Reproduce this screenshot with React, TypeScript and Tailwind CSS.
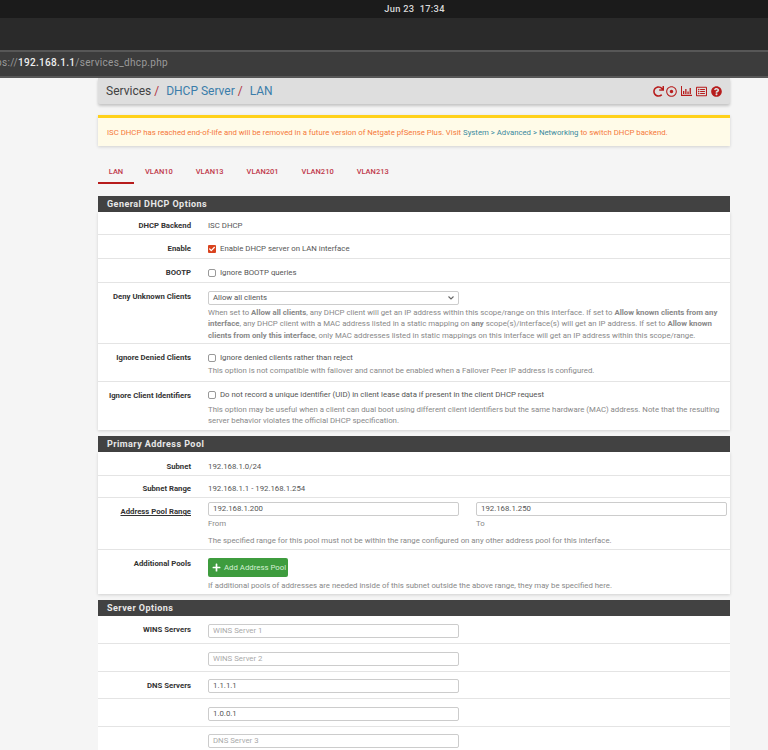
import { FaCheck, FaPlus, FaQuestionCircle, FaRedo, FaRegDotCircle, FaRegListAlt } from "react-icons/fa";
import type { ReactNode } from "react";

const Heading = ({ children, className = "" }: { children: ReactNode; className?: string }) => (
  <div className={`h-4 bg-[#424242] pl-[9px] text-[9px] leading-4 font-bold tracking-[0.45px] text-[#e8e8e8] ${className}`}>
    {children}
  </div>
);

const Row = ({ label, h, pt = "pt-0", labelPt = "pt-0", last = false, children, underline = false }: {
  label?: string; h: string; pt?: string; labelPt?: string; last?: boolean; children: ReactNode; underline?: boolean;
}) => (
  <div className={`flex ${h} ${pt} ${last ? "" : "border-b border-[#e4e4e4]"} box-border`}>
    <div className={`w-[93px] shrink-0 text-right ${labelPt} text-[7.75px] leading-3 font-bold text-[#333] ${underline ? "underline" : ""}`}>{label}</div>
    <div className="ml-[17px] min-w-0 flex-1 pr-[3px] text-[7.8px] leading-3 text-[#555]">{children}</div>
  </div>
);

const Help = ({ children, className = "" }: { children: ReactNode; className?: string }) => (
  <div className={`text-[7.8px] leading-[11.4px] text-[#888] ${className}`}>{children}</div>
);

const Check = ({ checked = false, label }: { checked?: boolean; label: string }) => (
  <div className="flex items-center gap-1">
    {checked ? (
      <span className="flex h-2 w-2 items-center justify-center rounded-[1px] bg-[#d9431e] text-white"><FaCheck size={6} /></span>
    ) : (
      <span className="box-border h-2 w-2 rounded-[2px] border border-[#999] bg-white" />
    )}
    <span>{label}</span>
  </div>
);

const Field = ({ value, placeholder }: { value?: string; placeholder?: string }) => (
  <div className={`box-border h-[14px] w-[251px] rounded-[2px] border border-[#ccc] bg-white pl-1 text-[7.8px] leading-3 ${value ? "text-[#555]" : "text-[#aaa]"}`}>
    {value ?? placeholder}
  </div>
);

// thin axis-and-bars chart glyph, the packaged one is too heavy
const ChartIcon = () => (
  <svg width="11" height="10" viewBox="0 0 11 10" fill="currentColor">
    <path d="M0 0h1v8.800h10V10H0z" />
    <path d="M2 5h1.300v3H2zM4.200 3h1.300v5H4.200zM6.400 5.500h1.300V8H6.400zM8.600 2h1.300v6H8.600z" />
  </svg>
);

export default function App() {
  return (
    <div className="h-[750px] overflow-hidden bg-[#f5f5f5] font-['Roboto',sans-serif]">
      <div className="flex h-[18px] items-center justify-center bg-[#1b1b1b] pl-[61px] text-[9.3px] font-medium tracking-[0.3px] text-[#d8d8d8]">
        Jun 23&nbsp;&nbsp;17:34
      </div>
      <div className="h-8 bg-[#2a2a2a]" />
      <div className="box-border h-[28px] border-y-2 border-[#575757] bg-[#3c3c3c] pt-[3px] indent-[-4px] text-[10px] leading-4 tracking-[0.32px] text-[#9a9a9a]">
        ps://<span className="font-medium text-[#eee]">192.168.1.1</span>/services_dhcp.php
      </div>

      <div className="mr-[38px] ml-[98px]">
        <div className="flex h-[26px] items-center justify-between rounded-b-[2px] bg-[#dedede] pr-2 pl-2 shadow-[0_2px_3px_rgba(0,0,0,0.2)]">
          <div className="text-[12px] text-[#424242]">
            Services<span className="text-[#b0333f]"> / </span>
            <span className="ml-1 text-[#3b7daa]">DHCP Server</span><span className="text-[#b0333f]"> / </span>
            <span className="ml-1 text-[#3b7daa]">LAN</span>
          </div>
          <div className="flex items-center gap-1 text-[#b71c1c]">
            <FaRedo size={11} />
            <FaRegDotCircle size={11} className="-ml-0.5" />
            <ChartIcon />
            <FaRegListAlt size={11} />
            <FaQuestionCircle size={11} />
          </div>
        </div>

        <div className="mt-[11px] box-border h-[31px] border-t-[3px] border-[#ffd11a] bg-[#fffbe8] pt-[9px] pl-[9px] text-[7.77px] leading-3 text-[#f5793b] shadow-[0_1px_3px_rgba(0,0,0,0.15)]">
          ISC DHCP has reached end-of-life and will be removed in a future version of Netgate pfSense Plus. Visit{" "}
          <span className="text-[#3b8a9e]">System &gt; Advanced &gt; Networking</span> to switch DHCP backend.
        </div>

        <div className="mt-[19px] flex h-[19px] text-[7.5px] leading-[13px] font-medium text-[#c0394b]">
          <div className="box-border w-9 border-b-[2px] border-[#b71c1c] text-center">LAN</div>
          <div className="ml-[11px] flex gap-[23px]">
            <span>VLAN10</span><span>VLAN13</span><span>VLAN201</span><span>VLAN210</span><span>VLAN213</span>
          </div>
        </div>

        <Heading className="mt-3">General DHCP Options</Heading>
        <div className="bg-white shadow-[0_1px_3px_rgba(0,0,0,0.15)]">
          <Row label="DHCP Backend" h="h-[23px]" pt="pt-2">ISC DHCP</Row>
          <Row label="Enable" h="h-6" pt="pt-2"><Check checked label="Enable DHCP server on LAN interface" /></Row>
          <Row label="BOOTP" h="h-6" pt="pt-2"><Check label="Ignore BOOTP queries" /></Row>
          <Row label="Deny Unknown Clients" h="h-[61px]" pt="pt-2">
            <div className="box-border flex h-[14px] w-[251px] items-center justify-between rounded-[2px] border border-[#ccc] bg-white pr-1 pl-1 text-[#555]">
              Allow all clients
              <svg width="6" height="4" viewBox="0 0 6 4"><path d="M0.5 0.5 3 3 5.5 0.5" fill="none" stroke="#666" strokeWidth="1.1" /></svg>
            </div>
            <Help className="mt-[2px]">
              When set to <b>Allow all clients</b>, any DHCP client will get an IP address within this scope/range on this interface. If set to <b>Allow known clients from any interface</b>, any DHCP client with a MAC address listed in a static mapping on <b>any</b> scope(s)/interface(s) will get an IP address. If set to <b>Allow known clients from only this interface</b>, only MAC addresses listed in static mappings on this interface will get an IP address within this scope/range.
            </Help>
          </Row>
          <Row label="Ignore Denied Clients" h="h-[38px]" pt="pt-2">
            <Check label="Ignore denied clients rather than reject" />
            <Help className="mt-[1px]">This option is not compatible with failover and cannot be enabled when a Failover Peer IP address is configured.</Help>
          </Row>
          <Row label="Ignore Client Identifiers" h="h-[48px]" pt="pt-[7px]" labelPt="pt-px" last>
            <Check label="Do not record a unique identifier (UID) in client lease data if present in the client DHCP request" />
            <Help className="mt-[3px]">This option may be useful when a client can dual boot using different client identifiers but the same hardware (MAC) address. Note that the resulting server behavior violates the official DHCP specification.</Help>
          </Row>
        </div>

        <Heading className="mt-1.5">Primary Address Pool</Heading>
        <div className="bg-white shadow-[0_1px_3px_rgba(0,0,0,0.15)]">
          <Row label="Subnet" h="h-6" pt="pt-[9px]">192.168.1.0/24</Row>
          <Row label="Subnet Range" h="h-[22px]" pt="pt-[7px]">192.168.1.1 - 192.168.1.254</Row>
          <Row label="Address Pool Range" h="h-[52px]" pt="pt-1" labelPt="pt-1" underline>
            <div className="flex gap-[17px]">
              <div>
                <Field value="192.168.1.200" />
                <Help className="mt-[2px]">From</Help>
              </div>
              <div>
                <Field value="192.168.1.250" />
                <Help className="mt-[2px]">To</Help>
              </div>
            </div>
            <Help className="mt-[6px]">The specified range for this pool must not be within the range configured on any other address pool for this interface.</Help>
          </Row>
          <Row label="Additional Pools" h="h-[44px]" pt="pt-2" last>
            <div className="flex h-[19px] w-20 items-center rounded-[2px] bg-[#3e9c3e] pl-1 text-[7.8px] whitespace-nowrap text-[#d5f0d5]">
              <FaPlus size={9} className="mr-[3px] text-white" />Add Address Pool
            </div>
            <Help className="mt-[3px]">If additional pools of addresses are needed inside of this subnet outside the above range, they may be specified here.</Help>
          </Row>
        </div>

        <Heading className="mt-1.5">Server Options</Heading>
        <div className="bg-white">
          <Row label="WINS Servers" h="h-7" pt="pt-2"><Field placeholder="WINS Server 1" /></Row>
          <Row h="h-7" pt="pt-2"><Field placeholder="WINS Server 2" /></Row>
          <Row label="DNS Servers" h="h-[27px]" pt="pt-[7px]" labelPt="pt-px"><Field value="1.1.1.1" /></Row>
          <Row h="h-7" pt="pt-2"><Field value="1.0.0.1" /></Row>
          <Row h="h-7" pt="pt-[7px]"><Field placeholder="DNS Server 3" /></Row>
        </div>
      </div>
    </div>
  );
}
